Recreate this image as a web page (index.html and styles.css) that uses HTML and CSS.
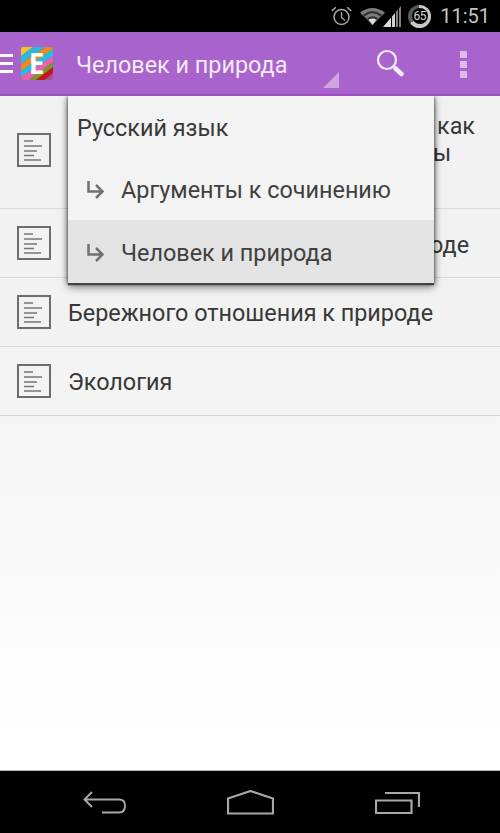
FILE: index.html
```html
<!DOCTYPE html>
<html lang="ru">
<head>
    <meta charset="UTF-8">
    <meta name="viewport" content="width=device-width, initial-scale=1.0">
    <title>Человек и природа</title>
    <link rel="stylesheet" href="styles.css">
</head>
<body>
    <div class="phone">
        <div class="status-bar">
            <svg class="st-alarm" width="21" height="20" viewBox="0 0 21 20">
                <circle cx="10.500" cy="11" r="7.500" fill="none" stroke="#a8a8a8" stroke-width="1.500"/>
                <path d="M10.500 6v5.500l3.500 3" fill="none" stroke="#a8a8a8" stroke-width="1.300"/>
                <path d="M.8 5L4.800 1.300M20.200 5L16.200 1.300" fill="none" stroke="#a8a8a8" stroke-width="1.500"/>
            </svg>
            <svg class="st-wifi" width="25" height="18" viewBox="0 0 25 18">
                <path d="M0 5.500Q12.500 -3.500 25 5.500L12.500 18Z" fill="#7c7c7c"/>
                <path d="M3 7.700Q12.500 .4 22 7.700L12.500 18Z" fill="#303030"/>
                <path d="M4.800 9.200Q12.500 3.400 20.200 9.200L12.500 18Z" fill="#7c7c7c"/>
                <path d="M7 11.300Q12.500 7.200 18 11.300L12.500 18Z" fill="#303030"/>
                <path d="M8.500 12.700Q12.500 10.200 16.500 12.700L12.500 18Z" fill="#dcdcdc"/>
            </svg>
            <svg class="st-signal" width="18" height="21" viewBox="0 0 18 21">
                <defs><clipPath id="signalClip"><path d="M0 21L18 0V21Z"/></clipPath></defs>
                <g clip-path="url(#signalClip)">
                    <rect x="0" width="8" height="21" fill="#dedede"/>
                    <rect x="9" width="3" height="21" fill="#d0d0d0"/>
                    <rect x="13" width="2" height="21" fill="#808080"/>
                    <rect x="16" width="2" height="21" fill="#808080"/>
                </g>
            </svg>
            <div class="st-battery"><span>65</span></div>
            <span class="st-time">11:51</span>
        </div>

        <header class="action-bar">
            <div class="burger"><i></i><i></i><i></i></div>
            <svg class="logo" width="32" height="33" viewBox="0 0 32 33">
                <defs><clipPath id="logoClip"><rect width="32" height="33" rx="2"/></clipPath></defs>
                <g clip-path="url(#logoClip)">
                    <rect width="32" height="33" fill="#a8528f"/>
                    <path d="M0 0H12L0 9Z" fill="#f5c12e"/>
                    <path d="M12 0H25L0 17V9Z" fill="#2fb7d8"/>
                    <path d="M25 0H32V2L0 24V17Z" fill="#f08a1e"/>
                    <path d="M32 2V9L0 30V24Z" fill="#23bfe0"/>
                    <path d="M32 9V15L8 33H0V30Z" fill="#ea5fae"/>
                    <path d="M32 15V20L15 33H8Z" fill="#6f9f1c"/>
                    <path d="M32 20V26L23 33H15Z" fill="#c8141c"/>
                </g>
                <text x="15.500" y="27" text-anchor="middle" class="logo-letter">E</text>
            </svg>
            <h1 class="bar-title">Человек и природа</h1>
            <svg class="bar-corner" width="16" height="16" viewBox="0 0 16 16"><path d="M0 16L16 0V16Z" fill="#cda6df"/></svg>
            <svg class="bar-search" width="30" height="30" viewBox="0 0 30 30">
                <circle cx="11" cy="11" r="9" fill="none" stroke="#f4ecf8" stroke-width="2.200"/>
                <path d="M19.500 19.500L25.500 25" stroke="#f4ecf8" stroke-width="4.500" stroke-linecap="round"/>
            </svg>
            <div class="bar-more"><i></i><i></i><i></i></div>
        </header>

        <main class="content">
            <ul class="topic-list">
                <li class="topic topic-tall">
                    <svg class="doc-icon" viewBox="0 0 34 34"><use href="#docIcon"/></svg>
                    <div class="topic-tail">
                        <span class="tail-line">как</span>
                        <span class="tail-line tail-short">ы</span>
                    </div>
                </li>
                <li class="topic">
                    <svg class="doc-icon" viewBox="0 0 34 34"><use href="#docIcon"/></svg>
                    <div class="topic-tail"><span class="tail-line tail-mid">оде</span></div>
                </li>
                <li class="topic">
                    <svg class="doc-icon" viewBox="0 0 34 34"><use href="#docIcon"/></svg>
                    <span class="topic-text">Бережного отношения к природе</span>
                </li>
                <li class="topic">
                    <svg class="doc-icon" viewBox="0 0 34 34"><use href="#docIcon"/></svg>
                    <span class="topic-text">Экология</span>
                </li>
            </ul>

            <div class="dropdown">
                <div class="drop-item">Русский язык</div>
                <div class="drop-item">
                    <svg class="drop-arrow" viewBox="0 0 18 18"><use href="#subArrow"/></svg>
                    Аргументы к сочинению
                </div>
                <div class="drop-item drop-active">
                    <svg class="drop-arrow" viewBox="0 0 18 18"><use href="#subArrow"/></svg>
                    Человек и природа
                </div>
            </div>
        </main>

        <nav class="nav-bar">
            <svg width="43" height="23" viewBox="0 0 43 23">
                <path d="M9 1L1.500 8.500L9 16M1.500 8.500H36Q42 8.500 42 14.500Q42 21.500 36 21.500H19" fill="none" stroke="#a8a8a8" stroke-width="2"/>
            </svg>
            <svg width="47" height="25" viewBox="0 0 47 25">
                <path d="M1 8.500L23.500 1L46 8.500V23.500H1Z" fill="none" stroke="#a8a8a8" stroke-width="2.200"/>
            </svg>
            <svg width="45" height="23" viewBox="0 0 45 23">
                <path d="M1 9.500H36.500V22H1ZM10 2H44V16" fill="none" stroke="#a8a8a8" stroke-width="2.200"/>
            </svg>
        </nav>
    </div>

    <svg class="icon-defs" width="0" height="0">
        <symbol id="docIcon" viewBox="0 0 34 34">
            <rect x="1" y="1" width="32" height="32" fill="none" stroke="#6d6d6d" stroke-width="2"/>
            <path d="M7 8H16M7 13H25M7 18H20M7 22.500H17M7 27H24" stroke="#777" stroke-width="1.700"/>
        </symbol>
        <symbol id="subArrow" viewBox="0 0 18 18">
            <path d="M2.500 0V10.500H16M10 4L16.500 10.500L10 17" fill="none" stroke="#707070" stroke-width="2.500"/>
        </symbol>
    </svg>
</body>
</html>
```

FILE: styles.css
```css
* {
    box-sizing: border-box;
}

body {
    margin: 0;
    font-family: Roboto, "Liberation Sans", sans-serif;
    background: #000;
}

.phone {
    width: 500px;
    height: 833px;
    display: flex;
    flex-direction: column;
    overflow: hidden;
}

.icon-defs {
    position: absolute;
}

/* status bar */
.status-bar {
    height: 32px;
    background: #000;
    color: #c4c4c4;
    display: flex;
    align-items: center;
    padding-right: 10px;
    justify-content: flex-end;
}

.st-alarm {
    margin-right: 8px;
}

.st-wifi {
    margin-right: -2px;
}

.st-signal {
    margin-right: 7px;
}

.st-battery {
    width: 23px;
    height: 23px;
    border-radius: 50%;
    background: conic-gradient(#c8c8c8 0 65%, #5a5a5a 65% 100%);
    display: flex;
    align-items: center;
    justify-content: center;
    margin-right: 9px;
}

.st-battery span {
    width: 16px;
    height: 16px;
    border-radius: 50%;
    background: #000;
    font-size: 12px;
    line-height: 16px;
    text-align: center;
    letter-spacing: -0.5px;
    color: #d8d8d8;
}

.st-time {
    font-size: 20px;
}

/* action bar */
.action-bar {
    height: 64px;
    flex-shrink: 0;
    background: #a864cc;
    border-bottom: 2px solid #9a50c0;
    display: flex;
    align-items: center;
    position: relative;
    z-index: 2;
}

.burger {
    width: 13px;
    display: flex;
    flex-direction: column;
    gap: 5px;
    margin-right: 8px;
}

.burger i {
    display: block;
    height: 3px;
    background: #fff;
}

.logo {
    margin-right: 23px;
    overflow: visible;
}

.logo-letter {
    font-family: "Open Sans", sans-serif;
    font-size: 28px;
    font-weight: 700;
    fill: #fff;
}

.bar-title {
    margin: 0;
    padding-top: 4px;
    font-size: 23.4px;
    font-weight: 400;
    color: #f4eaf8;
    white-space: nowrap;
}

.bar-corner {
    position: absolute;
    left: 323px;
    top: 40px;
}

.bar-search {
    position: absolute;
    left: 376px;
    top: 17px;
}

.bar-more {
    position: absolute;
    left: 460px;
    top: 19px;
    display: flex;
    flex-direction: column;
    gap: 3px;
}

.bar-more i {
    display: block;
    width: 7px;
    height: 7px;
    background: #d9bce8;
}

/* list */
.content {
    flex: 1;
    position: relative;
    background: linear-gradient(#f2f2f2 240px, #fff 640px);
    border-bottom: 1px solid #b5b5b5;
}

.topic-list {
    list-style: none;
    margin: 0;
    padding: 0;
}

.topic {
    height: 69px;
    display: flex;
    align-items: center;
    padding-left: 17px;
    border-bottom: 1px solid #d8d8d8;
    color: #383838;
    font-size: 23.4px;
}

.topic-text {
    padding-top: 2px;
}

.topic-tall {
    height: 113px;
    align-items: flex-start;
    padding-top: 37px;
}

.doc-icon {
    width: 34px;
    height: 34px;
    flex-shrink: 0;
    margin-right: 17px;
}

/* the ends of the titles that stick out from under the dropdown */
.topic-tail {
    display: flex;
    flex-direction: column;
}

.topic-tall .topic-tail {
    margin-top: -20px;
    line-height: 27px;
}

.tail-line {
    padding-left: 369px;
}

.tail-short {
    padding-left: 365px;
}

.tail-mid {
    padding-left: 362px;
    padding-top: 3px;
}

/* dropdown over the list */
.dropdown {
    position: absolute;
    left: 68px;
    top: 0;
    width: 366px;
    background: #f3f3f3;
    box-shadow: 0 2px 1px #444, 0 4px 8px rgba(0, 0, 0, 0.5), -1px 0 4px rgba(0, 0, 0, 0.3), 1px 0 4px rgba(0, 0, 0, 0.3);
}

.drop-item {
    height: 62px;
    display: flex;
    align-items: center;
    padding-left: 9px;
    padding-top: 2px;
    font-size: 23.4px;
    color: #404040;
}

.drop-item:first-child {
    color: #383838;
}

.drop-active {
    height: 63px;
    background: #e3e3e3;
}

.drop-arrow {
    width: 18px;
    height: 18px;
    margin-left: 9px;
    margin-right: 17px;
}

/* nav bar */
.nav-bar {
    height: 62px;
    flex-shrink: 0;
    background: #000;
    display: flex;
    align-items: center;
    padding-left: 83px;
    padding-right: 80px;
    justify-content: space-between;
}
```
